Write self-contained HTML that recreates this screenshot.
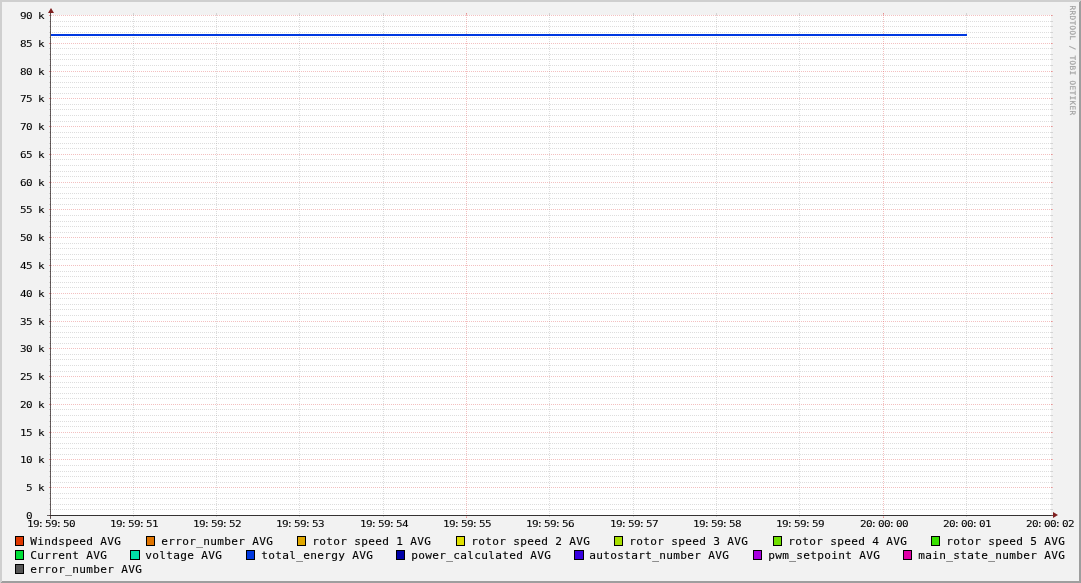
<!DOCTYPE html>
<html lang="en"><head><meta charset="utf-8"><title>RRDtool graph</title>
<style>
html,body{margin:0;padding:0;background:#f2f2f2;}
body{width:1081px;height:583px;overflow:hidden;}
svg{display:block;will-change:transform;}
text{font-family:"DejaVu Sans Mono","Liberation Mono",monospace;fill:#000;white-space:pre;}
.ax{font-size:9.4px;stroke:#000;stroke-width:0.06px;}
.lg{font-size:11.11px;stroke:#000;stroke-width:0.12px;}
.wm{font-size:7.64px;fill:#a0a0a0;stroke:#a0a0a0;stroke-width:0.15px;}
.g{stroke:rgba(143,143,143,0.30);stroke-width:1;stroke-dasharray:1 1;fill:none;}
.m{stroke:rgba(222,79,79,0.36);stroke-width:1;stroke-dasharray:1 1;fill:none;}
.gt{stroke:rgba(143,143,143,0.30);stroke-width:1;fill:none;}
.mt{stroke:rgba(222,79,79,0.36);stroke-width:1;fill:none;}
.bx{stroke:#000;stroke-width:1;}
</style></head><body>
<svg width="1081" height="583" viewBox="0 0 1081 583">
<rect x="0" y="0" width="1081" height="583" fill="#f2f2f2"/>
<polygon shape-rendering="crispEdges" fill="#cfcfcf" points="0,583 2,581 2,2 1079,2 1081,0 0,0"/>
<polygon shape-rendering="crispEdges" fill="#9e9e9e" points="2,581 1079,581 1079,2 1081,0 1081,583 0,583"/>
<rect shape-rendering="crispEdges" x="51" y="15" width="1000" height="500" fill="#fff"/>
<g shape-rendering="crispEdges">
<path class="g" d="M50 509.5 H1052"/>
<path class="gt" d="M49 509.5 h2 M1051 509.5 h2"/>
<path class="g" d="M50 504.5 H1052"/>
<path class="gt" d="M49 504.5 h2 M1051 504.5 h2"/>
<path class="g" d="M50 498.5 H1052"/>
<path class="gt" d="M49 498.5 h2 M1051 498.5 h2"/>
<path class="g" d="M50 493.5 H1052"/>
<path class="gt" d="M49 493.5 h2 M1051 493.5 h2"/>
<path class="g" d="M50 482.5 H1052"/>
<path class="gt" d="M49 482.5 h2 M1051 482.5 h2"/>
<path class="g" d="M50 476.5 H1052"/>
<path class="gt" d="M49 476.5 h2 M1051 476.5 h2"/>
<path class="g" d="M50 471.5 H1052"/>
<path class="gt" d="M49 471.5 h2 M1051 471.5 h2"/>
<path class="g" d="M50 465.5 H1052"/>
<path class="gt" d="M49 465.5 h2 M1051 465.5 h2"/>
<path class="g" d="M50 454.5 H1052"/>
<path class="gt" d="M49 454.5 h2 M1051 454.5 h2"/>
<path class="g" d="M50 448.5 H1052"/>
<path class="gt" d="M49 448.5 h2 M1051 448.5 h2"/>
<path class="g" d="M50 443.5 H1052"/>
<path class="gt" d="M49 443.5 h2 M1051 443.5 h2"/>
<path class="g" d="M50 437.5 H1052"/>
<path class="gt" d="M49 437.5 h2 M1051 437.5 h2"/>
<path class="g" d="M50 426.5 H1052"/>
<path class="gt" d="M49 426.5 h2 M1051 426.5 h2"/>
<path class="g" d="M50 421.5 H1052"/>
<path class="gt" d="M49 421.5 h2 M1051 421.5 h2"/>
<path class="g" d="M50 415.5 H1052"/>
<path class="gt" d="M49 415.5 h2 M1051 415.5 h2"/>
<path class="g" d="M50 409.5 H1052"/>
<path class="gt" d="M49 409.5 h2 M1051 409.5 h2"/>
<path class="g" d="M50 398.5 H1052"/>
<path class="gt" d="M49 398.5 h2 M1051 398.5 h2"/>
<path class="g" d="M50 393.5 H1052"/>
<path class="gt" d="M49 393.5 h2 M1051 393.5 h2"/>
<path class="g" d="M50 387.5 H1052"/>
<path class="gt" d="M49 387.5 h2 M1051 387.5 h2"/>
<path class="g" d="M50 382.5 H1052"/>
<path class="gt" d="M49 382.5 h2 M1051 382.5 h2"/>
<path class="g" d="M50 371.5 H1052"/>
<path class="gt" d="M49 371.5 h2 M1051 371.5 h2"/>
<path class="g" d="M50 365.5 H1052"/>
<path class="gt" d="M49 365.5 h2 M1051 365.5 h2"/>
<path class="g" d="M50 359.5 H1052"/>
<path class="gt" d="M49 359.5 h2 M1051 359.5 h2"/>
<path class="g" d="M50 354.5 H1052"/>
<path class="gt" d="M49 354.5 h2 M1051 354.5 h2"/>
<path class="g" d="M50 343.5 H1052"/>
<path class="gt" d="M49 343.5 h2 M1051 343.5 h2"/>
<path class="g" d="M50 337.5 H1052"/>
<path class="gt" d="M49 337.5 h2 M1051 337.5 h2"/>
<path class="g" d="M50 332.5 H1052"/>
<path class="gt" d="M49 332.5 h2 M1051 332.5 h2"/>
<path class="g" d="M50 326.5 H1052"/>
<path class="gt" d="M49 326.5 h2 M1051 326.5 h2"/>
<path class="g" d="M50 315.5 H1052"/>
<path class="gt" d="M49 315.5 h2 M1051 315.5 h2"/>
<path class="g" d="M50 309.5 H1052"/>
<path class="gt" d="M49 309.5 h2 M1051 309.5 h2"/>
<path class="g" d="M50 304.5 H1052"/>
<path class="gt" d="M49 304.5 h2 M1051 304.5 h2"/>
<path class="g" d="M50 298.5 H1052"/>
<path class="gt" d="M49 298.5 h2 M1051 298.5 h2"/>
<path class="g" d="M50 287.5 H1052"/>
<path class="gt" d="M49 287.5 h2 M1051 287.5 h2"/>
<path class="g" d="M50 282.5 H1052"/>
<path class="gt" d="M49 282.5 h2 M1051 282.5 h2"/>
<path class="g" d="M50 276.5 H1052"/>
<path class="gt" d="M49 276.5 h2 M1051 276.5 h2"/>
<path class="g" d="M50 271.5 H1052"/>
<path class="gt" d="M49 271.5 h2 M1051 271.5 h2"/>
<path class="g" d="M50 259.5 H1052"/>
<path class="gt" d="M49 259.5 h2 M1051 259.5 h2"/>
<path class="g" d="M50 254.5 H1052"/>
<path class="gt" d="M49 254.5 h2 M1051 254.5 h2"/>
<path class="g" d="M50 248.5 H1052"/>
<path class="gt" d="M49 248.5 h2 M1051 248.5 h2"/>
<path class="g" d="M50 243.5 H1052"/>
<path class="gt" d="M49 243.5 h2 M1051 243.5 h2"/>
<path class="g" d="M50 232.5 H1052"/>
<path class="gt" d="M49 232.5 h2 M1051 232.5 h2"/>
<path class="g" d="M50 226.5 H1052"/>
<path class="gt" d="M49 226.5 h2 M1051 226.5 h2"/>
<path class="g" d="M50 221.5 H1052"/>
<path class="gt" d="M49 221.5 h2 M1051 221.5 h2"/>
<path class="g" d="M50 215.5 H1052"/>
<path class="gt" d="M49 215.5 h2 M1051 215.5 h2"/>
<path class="g" d="M50 204.5 H1052"/>
<path class="gt" d="M49 204.5 h2 M1051 204.5 h2"/>
<path class="g" d="M50 198.5 H1052"/>
<path class="gt" d="M49 198.5 h2 M1051 198.5 h2"/>
<path class="g" d="M50 193.5 H1052"/>
<path class="gt" d="M49 193.5 h2 M1051 193.5 h2"/>
<path class="g" d="M50 187.5 H1052"/>
<path class="gt" d="M49 187.5 h2 M1051 187.5 h2"/>
<path class="g" d="M50 176.5 H1052"/>
<path class="gt" d="M49 176.5 h2 M1051 176.5 h2"/>
<path class="g" d="M50 171.5 H1052"/>
<path class="gt" d="M49 171.5 h2 M1051 171.5 h2"/>
<path class="g" d="M50 165.5 H1052"/>
<path class="gt" d="M49 165.5 h2 M1051 165.5 h2"/>
<path class="g" d="M50 159.5 H1052"/>
<path class="gt" d="M49 159.5 h2 M1051 159.5 h2"/>
<path class="g" d="M50 148.5 H1052"/>
<path class="gt" d="M49 148.5 h2 M1051 148.5 h2"/>
<path class="g" d="M50 143.5 H1052"/>
<path class="gt" d="M49 143.5 h2 M1051 143.5 h2"/>
<path class="g" d="M50 137.5 H1052"/>
<path class="gt" d="M49 137.5 h2 M1051 137.5 h2"/>
<path class="g" d="M50 132.5 H1052"/>
<path class="gt" d="M49 132.5 h2 M1051 132.5 h2"/>
<path class="g" d="M50 121.5 H1052"/>
<path class="gt" d="M49 121.5 h2 M1051 121.5 h2"/>
<path class="g" d="M50 115.5 H1052"/>
<path class="gt" d="M49 115.5 h2 M1051 115.5 h2"/>
<path class="g" d="M50 109.5 H1052"/>
<path class="gt" d="M49 109.5 h2 M1051 109.5 h2"/>
<path class="g" d="M50 104.5 H1052"/>
<path class="gt" d="M49 104.5 h2 M1051 104.5 h2"/>
<path class="g" d="M50 93.5 H1052"/>
<path class="gt" d="M49 93.5 h2 M1051 93.5 h2"/>
<path class="g" d="M50 87.5 H1052"/>
<path class="gt" d="M49 87.5 h2 M1051 87.5 h2"/>
<path class="g" d="M50 82.5 H1052"/>
<path class="gt" d="M49 82.5 h2 M1051 82.5 h2"/>
<path class="g" d="M50 76.5 H1052"/>
<path class="gt" d="M49 76.5 h2 M1051 76.5 h2"/>
<path class="g" d="M50 65.5 H1052"/>
<path class="gt" d="M49 65.5 h2 M1051 65.5 h2"/>
<path class="g" d="M50 59.5 H1052"/>
<path class="gt" d="M49 59.5 h2 M1051 59.5 h2"/>
<path class="g" d="M50 54.5 H1052"/>
<path class="gt" d="M49 54.5 h2 M1051 54.5 h2"/>
<path class="g" d="M50 48.5 H1052"/>
<path class="gt" d="M49 48.5 h2 M1051 48.5 h2"/>
<path class="g" d="M50 37.5 H1052"/>
<path class="gt" d="M49 37.5 h2 M1051 37.5 h2"/>
<path class="g" d="M50 32.5 H1052"/>
<path class="gt" d="M49 32.5 h2 M1051 32.5 h2"/>
<path class="g" d="M50 26.5 H1052"/>
<path class="gt" d="M49 26.5 h2 M1051 26.5 h2"/>
<path class="g" d="M50 21.5 H1052"/>
<path class="gt" d="M49 21.5 h2 M1051 21.5 h2"/>
<path class="m" d="M49 515.5 H1053"/>
<path class="mt" d="M49 515.5 h2 M1051 515.5 h2"/>
<path class="m" d="M49 487.5 H1053"/>
<path class="mt" d="M49 487.5 h2 M1051 487.5 h2"/>
<path class="m" d="M49 459.5 H1053"/>
<path class="mt" d="M49 459.5 h2 M1051 459.5 h2"/>
<path class="m" d="M49 432.5 H1053"/>
<path class="mt" d="M49 432.5 h2 M1051 432.5 h2"/>
<path class="m" d="M49 404.5 H1053"/>
<path class="mt" d="M49 404.5 h2 M1051 404.5 h2"/>
<path class="m" d="M49 376.5 H1053"/>
<path class="mt" d="M49 376.5 h2 M1051 376.5 h2"/>
<path class="m" d="M49 348.5 H1053"/>
<path class="mt" d="M49 348.5 h2 M1051 348.5 h2"/>
<path class="m" d="M49 321.5 H1053"/>
<path class="mt" d="M49 321.5 h2 M1051 321.5 h2"/>
<path class="m" d="M49 293.5 H1053"/>
<path class="mt" d="M49 293.5 h2 M1051 293.5 h2"/>
<path class="m" d="M49 265.5 H1053"/>
<path class="mt" d="M49 265.5 h2 M1051 265.5 h2"/>
<path class="m" d="M49 237.5 H1053"/>
<path class="mt" d="M49 237.5 h2 M1051 237.5 h2"/>
<path class="m" d="M49 209.5 H1053"/>
<path class="mt" d="M49 209.5 h2 M1051 209.5 h2"/>
<path class="m" d="M49 182.5 H1053"/>
<path class="mt" d="M49 182.5 h2 M1051 182.5 h2"/>
<path class="m" d="M49 154.5 H1053"/>
<path class="mt" d="M49 154.5 h2 M1051 154.5 h2"/>
<path class="m" d="M49 126.5 H1053"/>
<path class="mt" d="M49 126.5 h2 M1051 126.5 h2"/>
<path class="m" d="M49 98.5 H1053"/>
<path class="mt" d="M49 98.5 h2 M1051 98.5 h2"/>
<path class="m" d="M49 71.5 H1053"/>
<path class="mt" d="M49 71.5 h2 M1051 71.5 h2"/>
<path class="m" d="M49 43.5 H1053"/>
<path class="mt" d="M49 43.5 h2 M1051 43.5 h2"/>
<path class="m" d="M49 15.5 H1053"/>
<path class="mt" d="M49 15.5 h2 M1051 15.5 h2"/>
<path class="m" d="M50.5 518 V13"/>
<path class="mt" d="M50.5 13 v2 M50.5 515 v3"/>
<path class="g" d="M133.5 516 V14"/>
<path class="gt" d="M133.5 13 v2 M133.5 515 v2"/>
<path class="g" d="M216.5 516 V14"/>
<path class="gt" d="M216.5 13 v2 M216.5 515 v2"/>
<path class="g" d="M299.5 516 V14"/>
<path class="gt" d="M299.5 13 v2 M299.5 515 v2"/>
<path class="g" d="M383.5 516 V14"/>
<path class="gt" d="M383.5 13 v2 M383.5 515 v2"/>
<path class="m" d="M466.5 518 V13"/>
<path class="mt" d="M466.5 13 v2 M466.5 515 v3"/>
<path class="g" d="M549.5 516 V14"/>
<path class="gt" d="M549.5 13 v2 M549.5 515 v2"/>
<path class="g" d="M633.5 516 V14"/>
<path class="gt" d="M633.5 13 v2 M633.5 515 v2"/>
<path class="g" d="M716.5 516 V14"/>
<path class="gt" d="M716.5 13 v2 M716.5 515 v2"/>
<path class="g" d="M799.5 516 V14"/>
<path class="gt" d="M799.5 13 v2 M799.5 515 v2"/>
<path class="m" d="M883.5 518 V13"/>
<path class="mt" d="M883.5 13 v2 M883.5 515 v3"/>
<path class="g" d="M966.5 516 V14"/>
<path class="gt" d="M966.5 13 v2 M966.5 515 v2"/>
</g>
<rect shape-rendering="crispEdges" x="51" y="34" width="916" height="2" fill="#0038e0"/>
<g shape-rendering="crispEdges">
<rect x="47" y="515" width="1008" height="1" fill="rgba(32,32,32,0.68)"/>
<rect x="51" y="515" width="1000" height="1" fill="rgba(32,32,32,0.68)"/>
<rect x="50" y="11" width="1" height="508" fill="rgba(32,32,32,0.68)"/>
</g>
<polygon fill="#802020" points="1053,512 1053,518 1058,515"/>
<polygon fill="#802020" points="48,13 54,13 51,8"/>
<text class="ax" transform="translate(26.4,519) scale(1.17,1)" x="-0.27">0</text>
<text class="ax" transform="translate(26.4,491) scale(1.17,1)" x="-0.27 4.86 9.99">5 k</text>
<text class="ax" transform="translate(20.4,463) scale(1.17,1)" x="-0.27 4.86 9.99 15.12">10 k</text>
<text class="ax" transform="translate(20.4,436) scale(1.17,1)" x="-0.27 4.86 9.99 15.12">15 k</text>
<text class="ax" transform="translate(20.4,408) scale(1.17,1)" x="-0.27 4.86 9.99 15.12">20 k</text>
<text class="ax" transform="translate(20.4,380) scale(1.17,1)" x="-0.27 4.86 9.99 15.12">25 k</text>
<text class="ax" transform="translate(20.4,352) scale(1.17,1)" x="-0.27 4.86 9.99 15.12">30 k</text>
<text class="ax" transform="translate(20.4,325) scale(1.17,1)" x="-0.27 4.86 9.99 15.12">35 k</text>
<text class="ax" transform="translate(20.4,297) scale(1.17,1)" x="-0.27 4.86 9.99 15.12">40 k</text>
<text class="ax" transform="translate(20.4,269) scale(1.17,1)" x="-0.27 4.86 9.99 15.12">45 k</text>
<text class="ax" transform="translate(20.4,241) scale(1.17,1)" x="-0.27 4.86 9.99 15.12">50 k</text>
<text class="ax" transform="translate(20.4,213) scale(1.17,1)" x="-0.27 4.86 9.99 15.12">55 k</text>
<text class="ax" transform="translate(20.4,186) scale(1.17,1)" x="-0.27 4.86 9.99 15.12">60 k</text>
<text class="ax" transform="translate(20.4,158) scale(1.17,1)" x="-0.27 4.86 9.99 15.12">65 k</text>
<text class="ax" transform="translate(20.4,130) scale(1.17,1)" x="-0.27 4.86 9.99 15.12">70 k</text>
<text class="ax" transform="translate(20.4,102) scale(1.17,1)" x="-0.27 4.86 9.99 15.12">75 k</text>
<text class="ax" transform="translate(20.4,75) scale(1.17,1)" x="-0.27 4.86 9.99 15.12">80 k</text>
<text class="ax" transform="translate(20.4,47) scale(1.17,1)" x="-0.27 4.86 9.99 15.12">85 k</text>
<text class="ax" transform="translate(20.4,19) scale(1.17,1)" x="-0.27 4.86 9.99 15.12">90 k</text>
<text class="ax" transform="translate(27.3,527) scale(1.17,1)" x="-0.27 4.86 8.79 15.12 20.25 24.18 30.50 35.63">19:59:50</text>
<text class="ax" transform="translate(110.3,527) scale(1.17,1)" x="-0.27 4.86 8.79 15.12 20.25 24.18 30.50 35.63">19:59:51</text>
<text class="ax" transform="translate(193.3,527) scale(1.17,1)" x="-0.27 4.86 8.79 15.12 20.25 24.18 30.50 35.63">19:59:52</text>
<text class="ax" transform="translate(276.3,527) scale(1.17,1)" x="-0.27 4.86 8.79 15.12 20.25 24.18 30.50 35.63">19:59:53</text>
<text class="ax" transform="translate(360.3,527) scale(1.17,1)" x="-0.27 4.86 8.79 15.12 20.25 24.18 30.50 35.63">19:59:54</text>
<text class="ax" transform="translate(443.3,527) scale(1.17,1)" x="-0.27 4.86 8.79 15.12 20.25 24.18 30.50 35.63">19:59:55</text>
<text class="ax" transform="translate(526.3,527) scale(1.17,1)" x="-0.27 4.86 8.79 15.12 20.25 24.18 30.50 35.63">19:59:56</text>
<text class="ax" transform="translate(610.3,527) scale(1.17,1)" x="-0.27 4.86 8.79 15.12 20.25 24.18 30.50 35.63">19:59:57</text>
<text class="ax" transform="translate(693.3,527) scale(1.17,1)" x="-0.27 4.86 8.79 15.12 20.25 24.18 30.50 35.63">19:59:58</text>
<text class="ax" transform="translate(776.3,527) scale(1.17,1)" x="-0.27 4.86 8.79 15.12 20.25 24.18 30.50 35.63">19:59:59</text>
<text class="ax" transform="translate(860.3,527) scale(1.17,1)" x="-0.27 4.86 8.79 15.12 20.25 24.18 30.50 35.63">20:00:00</text>
<text class="ax" transform="translate(943.3,527) scale(1.17,1)" x="-0.27 4.86 8.79 15.12 20.25 24.18 30.50 35.63">20:00:01</text>
<text class="ax" transform="translate(1026.3,527) scale(1.17,1)" x="-0.27 4.86 8.79 15.12 20.25 24.18 30.50 35.63">20:00:02</text>
<rect class="bx" shape-rendering="crispEdges" x="15.5" y="536.5" width="8" height="9" fill="#e03800"/>
<text class="lg" transform="translate(30,545)" x="0.16 7.16 14.16 21.16 28.16 35.16 42.16 49.16 56.16 63.16 70.16 77.16 84.16">Windspeed AVG</text>
<rect class="bx" shape-rendering="crispEdges" x="146.5" y="536.5" width="8" height="9" fill="#e07400"/>
<text class="lg" transform="translate(161,545)" x="0.16 7.16 14.16 21.16 28.16 35.16 42.16 49.16 56.16 63.16 70.16 77.16 84.16 91.16 98.16 105.16">error_number AVG</text>
<rect class="bx" shape-rendering="crispEdges" x="297.5" y="536.5" width="8" height="9" fill="#e0a800"/>
<text class="lg" transform="translate(312,545)" x="0.16 7.16 14.16 21.16 28.16 35.16 42.16 49.16 56.16 63.16 70.16 77.16 84.16 91.16 98.16 105.16 112.16">rotor speed 1 AVG</text>
<rect class="bx" shape-rendering="crispEdges" x="456.5" y="536.5" width="8" height="9" fill="#e0e000"/>
<text class="lg" transform="translate(471,545)" x="0.16 7.16 14.16 21.16 28.16 35.16 42.16 49.16 56.16 63.16 70.16 77.16 84.16 91.16 98.16 105.16 112.16">rotor speed 2 AVG</text>
<rect class="bx" shape-rendering="crispEdges" x="614.5" y="536.5" width="8" height="9" fill="#a8e000"/>
<text class="lg" transform="translate(629,545)" x="0.16 7.16 14.16 21.16 28.16 35.16 42.16 49.16 56.16 63.16 70.16 77.16 84.16 91.16 98.16 105.16 112.16">rotor speed 3 AVG</text>
<rect class="bx" shape-rendering="crispEdges" x="773.5" y="536.5" width="8" height="9" fill="#70e000"/>
<text class="lg" transform="translate(788,545)" x="0.16 7.16 14.16 21.16 28.16 35.16 42.16 49.16 56.16 63.16 70.16 77.16 84.16 91.16 98.16 105.16 112.16">rotor speed 4 AVG</text>
<rect class="bx" shape-rendering="crispEdges" x="931.5" y="536.5" width="8" height="9" fill="#38e000"/>
<text class="lg" transform="translate(946,545)" x="0.16 7.16 14.16 21.16 28.16 35.16 42.16 49.16 56.16 63.16 70.16 77.16 84.16 91.16 98.16 105.16 112.16">rotor speed 5 AVG</text>
<rect class="bx" shape-rendering="crispEdges" x="15.5" y="550.5" width="8" height="9" fill="#00e038"/>
<text class="lg" transform="translate(30,559)" x="0.16 7.16 14.16 21.16 28.16 35.16 42.16 49.16 56.16 63.16 70.16">Current AVG</text>
<rect class="bx" shape-rendering="crispEdges" x="130.5" y="550.5" width="9" height="9" fill="#00e0a8"/>
<text class="lg" transform="translate(145,559)" x="0.16 7.16 14.16 21.16 28.16 35.16 42.16 49.16 56.16 63.16 70.16">voltage AVG</text>
<rect class="bx" shape-rendering="crispEdges" x="246.5" y="550.5" width="8" height="9" fill="#0038e0"/>
<text class="lg" transform="translate(261,559)" x="0.16 7.16 14.16 21.16 28.16 35.16 42.16 49.16 56.16 63.16 70.16 77.16 84.16 91.16 98.16 105.16">total_energy AVG</text>
<rect class="bx" shape-rendering="crispEdges" x="396.5" y="550.5" width="8" height="9" fill="#0000a8"/>
<text class="lg" transform="translate(411,559)" x="0.16 7.16 14.16 21.16 28.16 35.16 42.16 49.16 56.16 63.16 70.16 77.16 84.16 91.16 98.16 105.16 112.16 119.16 126.16 133.16">power_calculated AVG</text>
<rect class="bx" shape-rendering="crispEdges" x="574.5" y="550.5" width="9" height="9" fill="#3800e0"/>
<text class="lg" transform="translate(589,559)" x="0.16 7.16 14.16 21.16 28.16 35.16 42.16 49.16 56.16 63.16 70.16 77.16 84.16 91.16 98.16 105.16 112.16 119.16 126.16 133.16">autostart_number AVG</text>
<rect class="bx" shape-rendering="crispEdges" x="753.5" y="550.5" width="8" height="9" fill="#a800e0"/>
<text class="lg" transform="translate(768,559)" x="0.16 7.16 14.16 21.16 28.16 35.16 42.16 49.16 56.16 63.16 70.16 77.16 84.16 91.16 98.16 105.16">pwm_setpoint AVG</text>
<rect class="bx" shape-rendering="crispEdges" x="903.5" y="550.5" width="8" height="9" fill="#e000a8"/>
<text class="lg" transform="translate(918,559)" x="0.16 7.16 14.16 21.16 28.16 35.16 42.16 49.16 56.16 63.16 70.16 77.16 84.16 91.16 98.16 105.16 112.16 119.16 126.16 133.16 140.16">main_state_number AVG</text>
<rect class="bx" shape-rendering="crispEdges" x="15.5" y="564.5" width="8" height="9" fill="#555555"/>
<text class="lg" transform="translate(30,573)" x="0.16 7.16 14.16 21.16 28.16 35.16 42.16 49.16 56.16 63.16 70.16 77.16 84.16 91.16 98.16 105.16">error_number AVG</text>
<g transform="translate(1070,5.4) rotate(90)"><text class="wm" transform="translate(0,0)" x="0.20 5.20 10.20 15.20 20.20 25.20 30.20 35.20 40.20 45.20 50.20 55.20 60.20 65.20 70.20 75.20 80.20 85.20 90.20 95.20 100.20 105.20">RRDTOOL / TOBI OETIKER</text></g>
</svg>
</body></html>
